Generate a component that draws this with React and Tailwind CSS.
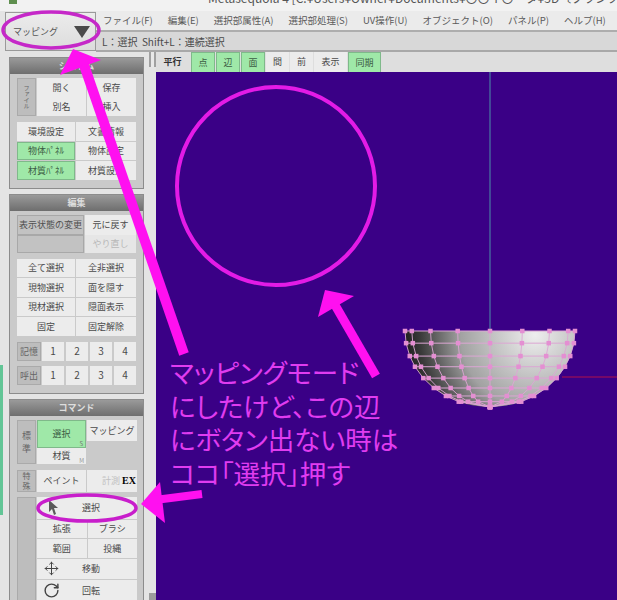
import { Move, RotateCw } from "lucide-react";

const menus = ["ファイル(F)", "編集(E)", "選択部属性(A)", "選択部処理(S)", "UV操作(U)", "オブジェクト(O)", "パネル(P)", "ヘルプ(H)"];

const tabs = [
  { label: "点", on: true, w: "w-[24px]" },
  { label: "辺", on: true, w: "w-[24px]" },
  { label: "面", on: true, w: "w-[24px]" },
  { label: "間", w: "w-[23px]" },
  { label: "前", w: "w-[23px]" },
  { label: "表示", w: "w-[33px]" },
  { label: "同期", on: true, w: "w-[33px]" },
];

// hemisphere mesh, page coordinates
const lats = [0, 0.16, 0.33, 0.47, 0.62, 0.75, 0.855, 0.93, 1];
const lons = [-1, -0.92, -0.7, -0.38, 0, 0.38, 0.7, 0.92, 1];
const point = (lat, lon) => [490 + 85 * Math.sqrt(1 - lat * lat) * lon, 331 + 76 * lat];

function Btn({ children, on, gray, dim, className = "" }) {
  let tone = "bg-[#ececec] text-[#4a4a4a]";
  if (on) tone = "bg-[#9fe8a8] text-[#3c5c44] border border-[#7fb98a]";
  if (gray) tone = "bg-[#c2c2c2] text-[#505050] border border-[#a8a8a8]";
  if (dim) tone = "bg-[#e6e6e6] text-[#b8b8b8]";
  return <div className={`relative flex items-center justify-center whitespace-nowrap text-[9px] leading-none ${tone} ${className}`}>{children}</div>;
}

function Side({ children, className = "" }) {
  return (
    <div className={`flex flex-col items-center justify-center bg-[#bdbdbd] border border-[#aaaaaa] text-[#666666] leading-[13px] ${className}`}>
      {children}
    </div>
  );
}

function Panel({ title, children }) {
  return (
    <div className="w-[135px] shrink-0 border border-[#8c8c8c] bg-[#cacaca] mt-[5px]">
      <div className="h-[16px] flex items-center justify-center bg-gradient-to-b from-[#9a9a9a] to-[#6e6e6e] text-[#dddddd] text-[9px] font-bold">{title}</div>
      <div className="flex flex-col px-[7px] pt-[4px] pb-[8px]">{children}</div>
    </div>
  );
}

function TwoCols({ rows }) {
  return (
    <div className="grid grid-cols-[58px_60px] gap-px">
      {rows.map((r) => (
        <Btn key={r.label} on={r.on} className="h-[18.5px]">{r.label}</Btn>
      ))}
    </div>
  );
}

function NumRow({ label }) {
  return (
    <div className="flex h-[19px] gap-[2px]">
      <Side className="w-[24px] mr-[-1px] text-[9px]">{label}</Side>
      {[1, 2, 3, 4].map((n) => (
        <Btn key={n} className="w-[22px] !text-[10px]">{n}</Btn>
      ))}
    </div>
  );
}

export default function App() {
  return (
    <div className="relative w-[617px] h-[600px] overflow-hidden flex flex-col bg-[#e4e4e4] font-['Noto_Sans_CJK_JP','Noto_Sans',sans-serif]">
      {/* title bar */}
      <div className="h-[11px] shrink-0 flex bg-[#f2f2f2] overflow-hidden whitespace-nowrap">
        <div className="ml-[9px] w-[8px] h-[4px] shrink-0 bg-[#5f8f4f]" />
        <div className="ml-[191px] shrink-0 -mt-[10px] text-[12px] leading-[16px] text-[#555555]">
          Metasequoia 4 [C:¥Users¥Owner¥Documents¥〇〇イ〇ータ¥3D〔ブランク¥メタセコ
        </div>
      </div>

      {/* mode button + menu + hint row */}
      <div className="h-[41px] shrink-0 flex">
        <div className="ml-[5px] mt-px w-[91px] h-[39px] shrink-0 flex items-center justify-between pl-[7px] pr-[5px] border border-[#9a9a9a] bg-gradient-to-b from-[#ececec] to-[#dcdcdc] text-[9px] text-[#555555] whitespace-nowrap">
          マッピング
          <svg className="shrink-0" width="16" height="12" viewBox="0 0 16 12"><path d="M0 0h16L8 12z" fill="#4a4a4a" /></svg>
        </div>
        <div className="flex-1 min-w-0 flex flex-col">
          <div className="h-[21px] flex items-center gap-[15px] pl-[7px] bg-[#ebebeb] border-b-2 border-[#adadad] text-[9.5px] text-[#5a5a5a] whitespace-nowrap">
            {menus.map((m) => <span key={m}>{m}</span>)}
          </div>
          <div className="flex-1 flex items-center pl-[6px] bg-[#d8d8d8] border-b-2 border-[#a8a8a8] text-[10px] text-[#4a4a4a] whitespace-pre">
            L：選択  Shift+L：連続選択
          </div>
        </div>
      </div>

      <div className="flex-1 flex min-h-0">
        {/* left side */}
        <div className="w-[156px] shrink-0 flex">
          <div className="w-[3px] h-[150px] mt-[313px] bg-[#62c596]" />
          <div className="w-[141px] pl-[6px] flex flex-col overflow-hidden">
            <Panel title="システム">
              <div className="grid grid-cols-[19px_49px_49px] gap-x-px h-[38px]">
                <Side className="row-span-2">
                  <span className="[writing-mode:vertical-rl] text-[6px] leading-[7px]">ファイル</span>
                </Side>
                <Btn>開く</Btn>
                <Btn>保存</Btn>
                <Btn>別名</Btn>
                <Btn>挿入</Btn>
              </div>
              <div className="mt-[6px]">
                <TwoCols
                  rows={[
                    { label: "環境設定" },
                    { label: "文書情報" },
                    { label: "物体ﾊﾟﾈﾙ", on: true },
                    { label: "物体設定" },
                    { label: "材質ﾊﾟﾈﾙ", on: true },
                    { label: "材質設定" },
                  ]}
                />
              </div>
            </Panel>

            <Panel title="編集">
              <div className="grid grid-cols-[67px_51px] gap-x-px h-[38px]">
                <Btn gray>表示状態の変更</Btn>
                <Btn>元に戻す</Btn>
                <Btn gray />
                <Btn dim>やり直し</Btn>
              </div>
              <div className="mt-[6px]">
                <TwoCols
                  rows={[
                    { label: "全て選択" },
                    { label: "全非選択" },
                    { label: "現物選択" },
                    { label: "面を隠す" },
                    { label: "現材選択" },
                    { label: "隠面表示" },
                    { label: "固定" },
                    { label: "固定解除" },
                  ]}
                />
              </div>
              <div className="mt-[6px] flex flex-col gap-[5px]">
                <NumRow label="記憶" />
                <NumRow label="呼出" />
              </div>
            </Panel>

            <Panel title="コマンド">
              <div className="grid grid-cols-[19px_49px_50px] gap-x-px h-[44px]">
                <Side className="row-span-2 text-[9px]">
                  <span>標</span>
                  <span>準</span>
                </Side>
                <Btn on>
                  選択
                  <span className="absolute right-[2px] bottom-0 text-[6px] text-[#777777]">S</span>
                </Btn>
                <Btn className="h-[21px]">マッピング</Btn>
                <Btn>
                  材質
                  <span className="absolute right-[2px] bottom-0 text-[6px] text-[#999999]">M</span>
                </Btn>
              </div>
              <div className="mt-[6px] grid grid-cols-[19px_49px_50px] gap-x-px h-[21px]">
                <Side className="!text-[8px] !leading-[10px]">
                  <span>特</span>
                  <span>殊</span>
                </Side>
                <Btn>ペイント</Btn>
                <Btn className="!justify-end pr-px !text-[#c0c0c0]">
                  計測
                  <span className="ml-[2px] font-['Liberation_Serif',serif] font-bold text-[10px] text-black">EX</span>
                </Btn>
              </div>
              <div className="mt-[6px] grid grid-cols-[19px_100px] gap-x-px">
                <Side />
                <div className="flex flex-col gap-px">
                  <Btn className="h-[22px]">
                    <svg className="absolute left-[11px] top-[3px]" width="11" height="15" viewBox="0 0 11 15"><path d="M1 0l9 8H6l2 6-2 1-2-6-3 3z" fill="#5a5a5a" /></svg>
                    <span className="pl-[8px]">選択</span>
                  </Btn>
                  <div className="grid grid-cols-2 gap-px">
                    <Btn className="h-[18px]">拡張</Btn>
                    <Btn className="h-[18px]">ブラシ</Btn>
                    <Btn className="h-[19px]">範囲</Btn>
                    <Btn className="h-[19px]">投縄</Btn>
                  </div>
                  <Btn className="h-[20px]">
                    <Move className="absolute left-[7px] top-[2px] text-[#444444]" size={15} strokeWidth={1.6} />
                    <span className="pl-[8px]">移動</span>
                  </Btn>
                  <Btn className="h-[21px]">
                    <RotateCw className="absolute left-[6px] top-[2px] text-[#444444]" size={17} strokeWidth={2} />
                    <span className="pl-[8px]">回転</span>
                  </Btn>
                </div>
              </div>
            </Panel>
          </div>
          {/* scroll strip */}
          <div className="w-[12px] flex flex-col justify-between items-end">
            <div className="w-[7px] h-[15px] bg-[#e8e8e8] border-x-2 border-[#a0a0a0]" />
            <div className="w-[7px] h-[7px] bg-[#9c9c9c]" />
          </div>
        </div>

        {/* main area */}
        <div className="flex-1 min-w-0 flex flex-col">
          <div className="h-[20px] shrink-0 flex items-stretch gap-px pl-px bg-[#dedede] text-[9px] text-[#4a4a4a]">
            <div className="w-[31px] mr-[2px] flex items-center justify-center font-bold text-[#333333]">平行</div>
            {tabs.map((t) => (
              <div
                key={t.label}
                className={`${t.w} flex items-center justify-center ${t.on ? "bg-[#9fe8a8] border-t border-x border-[#7fb98a] text-[#3c5c44]" : "bg-[#ececec]"}`}
              >
                {t.label}
              </div>
            ))}
          </div>
          <div className="flex-1 min-h-0 bg-[#3a0086]">
            <svg className="w-full h-full block" viewBox="156 72 461 528">
              <defs>
                <radialGradient id="bowl" gradientUnits="userSpaceOnUse" cx="535" cy="335" r="135">
                  <stop offset="0" stopColor="#eeeeee" />
                  <stop offset="0.55" stopColor="#a2a2a2" />
                  <stop offset="0.85" stopColor="#3a3a3a" />
                  <stop offset="1" stopColor="#161616" />
                </radialGradient>
              </defs>
              <line x1="490" y1="72" x2="490" y2="331" stroke="#46609c" strokeWidth="1.5" />
              <line x1="562" y1="377" x2="617" y2="377" stroke="#b0104a" strokeWidth="1" />
              <path d="M405 331H575A85 76 0 0 1 405 331Z" fill="url(#bowl)" />
              {lats.map((lat) => {
                const [x1, y] = point(lat, -1);
                const [x2] = point(lat, 1);
                return <line key={lat} x1={x1} y1={y} x2={x2} y2={y} stroke="#dca6d4" strokeWidth="1" />;
              })}
              {lons.map((lon) => (
                <polyline
                  key={lon}
                  points={lats.map((lat) => point(lat, lon).join(",")).join(" ")}
                  fill="none"
                  stroke="#dca6d4"
                  strokeWidth="0.9"
                />
              ))}
              {lats.flatMap((lat) =>
                lons.map((lon) => {
                  const [x, y] = point(lat, lon);
                  return <rect key={`${lat}-${lon}`} x={x - 2.25} y={y - 2.25} width="4.5" height="4.5" fill="#e48fd2" />;
                })
              )}
            </svg>
          </div>
        </div>
      </div>

      {/* hand-drawn notes on top of the screenshot */}
      <svg className="absolute inset-0 pointer-events-none" width="617" height="600" viewBox="0 0 617 600">
        <circle cx="276" cy="186" r="99" fill="none" stroke="#e31be6" strokeWidth="4" />
        <ellipse cx="51" cy="30" rx="48" ry="18" fill="none" stroke="#c528c8" strokeWidth="3.5" />
        <ellipse cx="87" cy="508" rx="49" ry="13" fill="none" stroke="#c81ecb" strokeWidth="3.5" />
        <path d="M73 49L60 75L101 60Z" fill="#ff10f0" />
        <line x1="84" y1="65" x2="184" y2="354" stroke="#ff10f0" strokeWidth="10" />
        <path d="M325 290L318 317L354 296Z" fill="#ff10f0" />
        <line x1="335" y1="305" x2="376" y2="376" stroke="#ff10f0" strokeWidth="9" />
        <path d="M141 504L160 482L165 523Z" fill="#ff10f0" />
        <line x1="155" y1="500" x2="202" y2="494" stroke="#ff10f0" strokeWidth="8" />
      </svg>
      <div className="absolute left-[170px] top-[355px] text-[26.5px] leading-[33.5px] text-[#e03cf0] whitespace-pre [font-feature-settings:'palt']">
        {"マッピングモード\nにしたけど、この辺\nにボタン出ない時は\nココ「選択」押す"}
      </div>
    </div>
  );
}
